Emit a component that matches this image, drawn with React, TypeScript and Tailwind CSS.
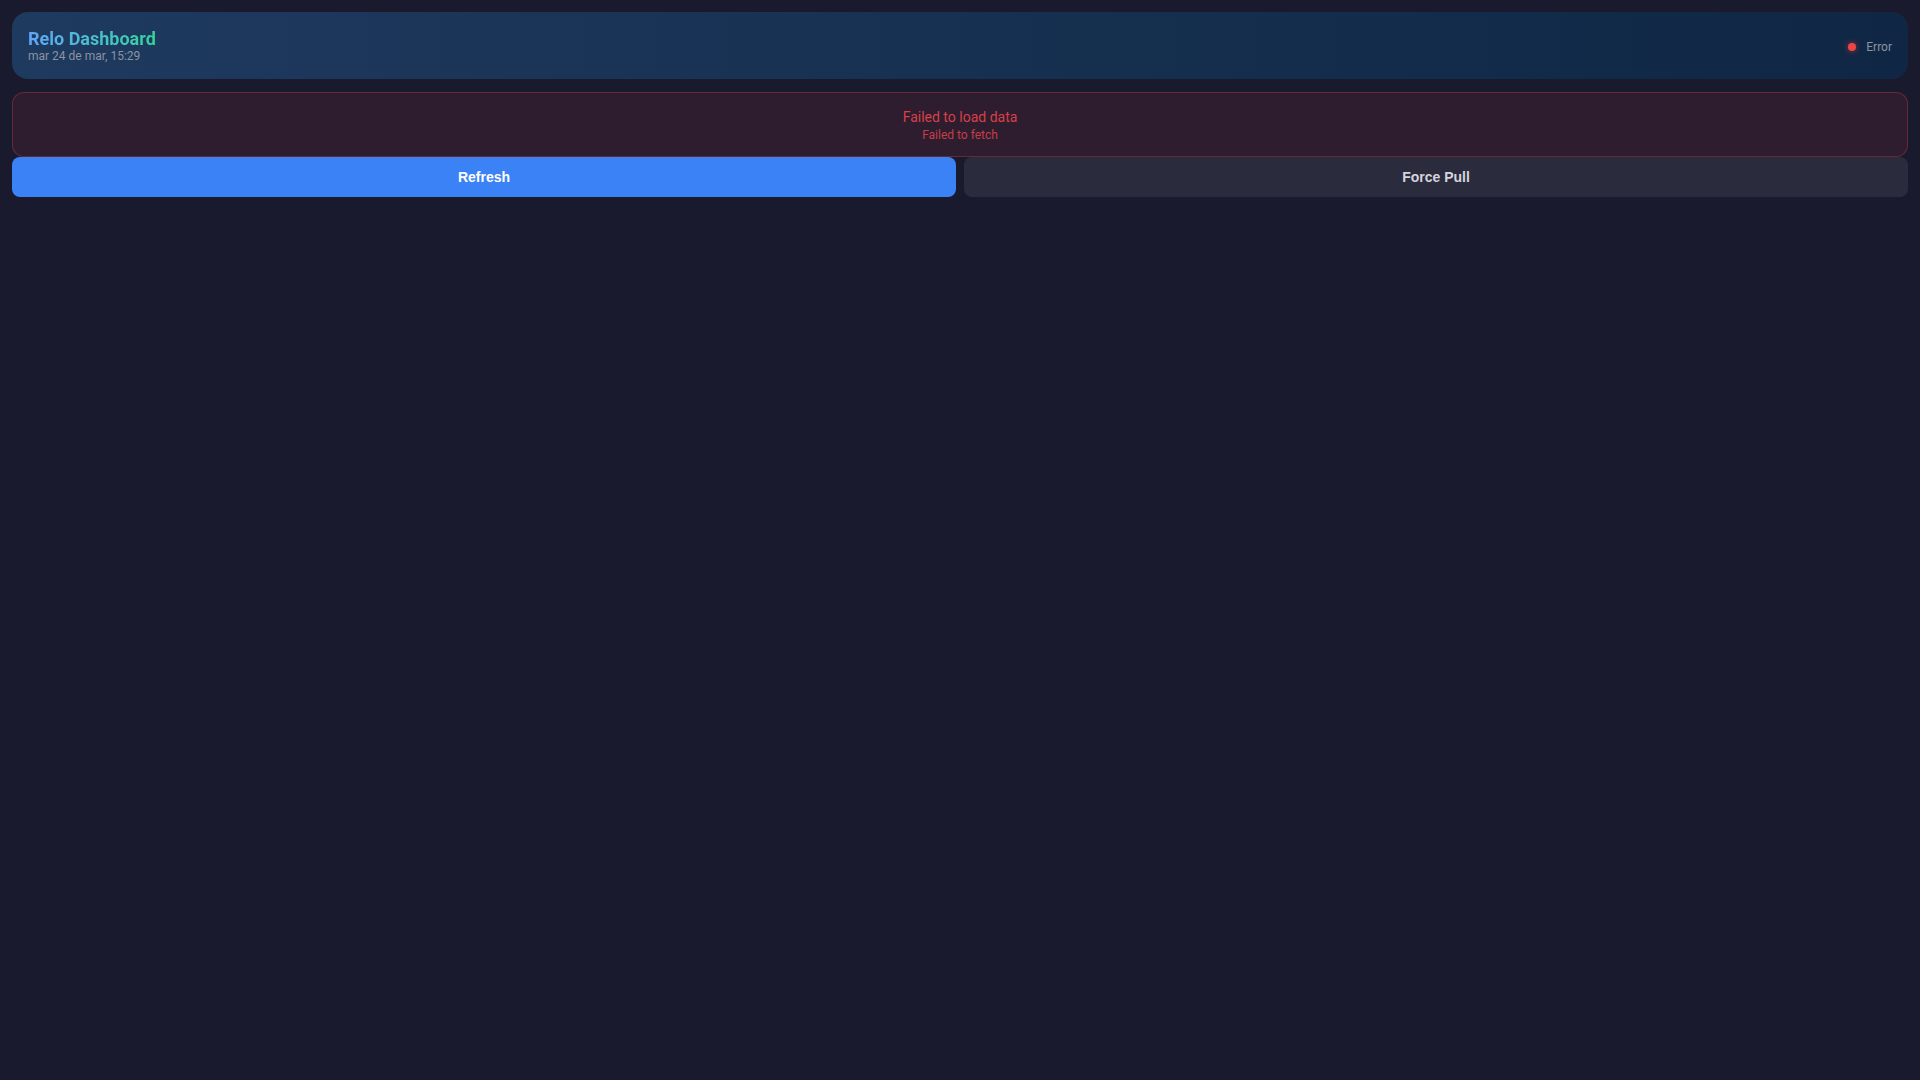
import React from "react";

export default function App() {
  return (
    <div className="min-h-screen w-full bg-[#1a1a2e] p-3" style={{ fontFamily: "Roboto, 'Liberation Sans', sans-serif" }}>
      <header className="flex h-[67px] items-center justify-between rounded-2xl bg-gradient-to-r from-[#1e3a5f] to-[#0f2744] px-4">
        <div className="flex flex-col pt-0.5">
          <h1 className="bg-gradient-to-r from-[#60a5fa] to-[#34d399] bg-clip-text text-lg font-bold leading-[18px] text-transparent w-fit">
            Relo Dashboard
          </h1>
          <span className="text-xs leading-4 text-[#8b93a1]">mar 24 de mar, 15:29</span>
        </div>
        <div className="mt-0.5 flex items-center gap-2.5">
          <span className="h-2 w-2 rounded-full bg-[#ef4444] shadow-[0_0_6px_rgba(239,68,68,0.6)]" />
          <span className="text-xs text-[#8b93a1]">Error</span>
        </div>
      </header>

      <div className="mt-[13px] flex h-[65px] flex-col items-center justify-center rounded-xl border border-[rgba(239,68,68,0.3)] bg-[rgba(239,68,68,0.09)]">
        <span className="text-sm leading-5 text-[#d9404a]">Failed to load data</span>
        <span className="text-xs leading-4 text-[#c53d47]">Failed to fetch</span>
      </div>

      <div className="flex gap-2">
        <button
          className="h-10 flex-1 rounded-lg bg-[#3b82f6] text-sm font-bold text-white"
          style={{ fontFamily: "'Liberation Sans', Arial, sans-serif" }}
        >
          Refresh
        </button>
        <button
          className="h-10 flex-1 rounded-lg bg-[rgba(255,255,255,0.08)] text-sm font-bold text-[#d4d4dc]"
          style={{ fontFamily: "'Liberation Sans', Arial, sans-serif" }}
        >
          Force Pull
        </button>
      </div>
    </div>
  );
}
